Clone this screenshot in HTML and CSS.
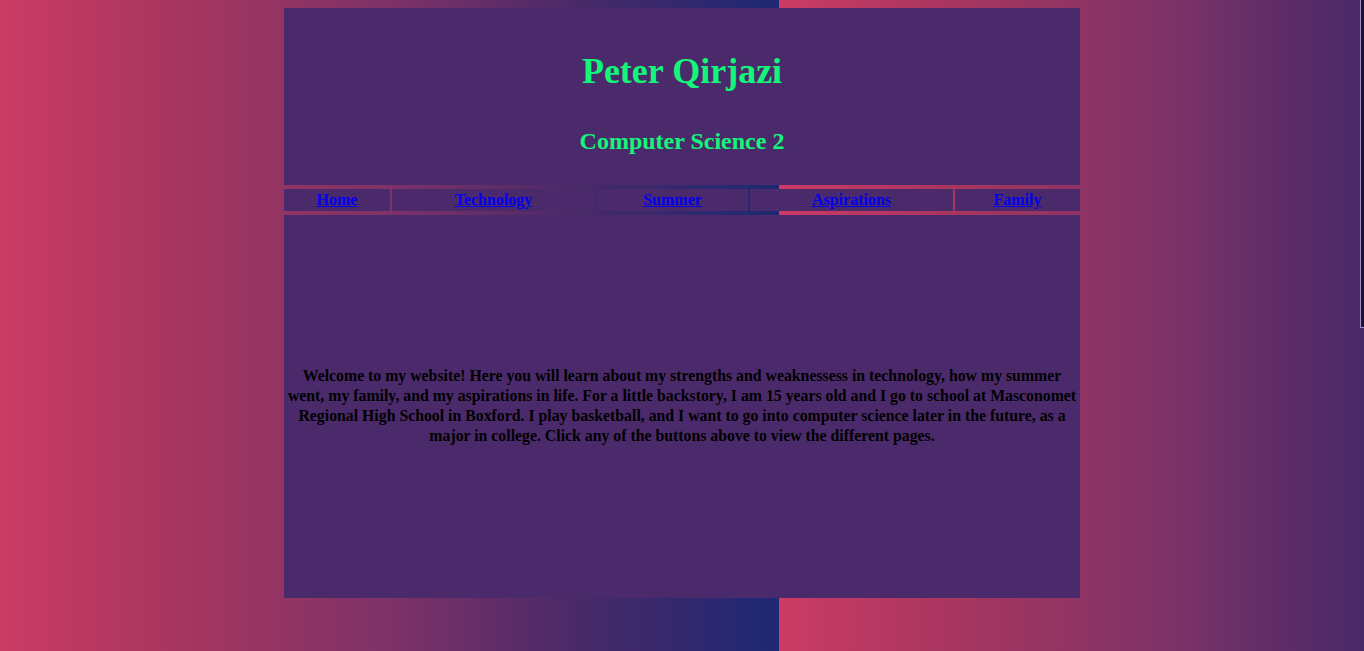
FILE: index.html
```html
<!DOCTYPE html>
<html lang="en">
<head>
<meta charset="utf-8">
<title>Peter Qirjazi</title>
<link rel="stylesheet" href="styles.css">
</head>
<body>
<div class="page">
  <header class="masthead">
    <h1 class="title">Peter Qirjazi</h1>
    <h2 class="subtitle">Computer Science 2</h2>
  </header>
  <nav class="nav">
    <div class="nav-cell"><a href="#">Home</a></div>
    <div class="nav-cell"><a href="#">Technology</a></div>
    <div class="nav-cell"><a href="#">Summer</a></div>
    <div class="nav-cell"><a href="#">Aspirations</a></div>
    <div class="nav-cell"><a href="#">Family</a></div>
  </nav>
  <main class="content">
    <p class="intro">Welcome to my website! Here you will learn about my strengths and weaknessess in technology, how my summer went, my family, and my aspirations in life. For a little backstory, I am 15 years old and I go to school at Masconomet Regional High School in Boxford. I play basketball, and I want to go into computer science later in the future, as a major in college. Click any of the buttons above to view the different pages.</p>
  </main>
</div>
<div class="edge-box"></div>
</body>
</html>
```

FILE: styles.css
```css
html {
  min-height: 100%;
  background: linear-gradient(to right, #cb3b65 0%, #a8365f 22%, #7e3268 50%, #472968 75%, #1e2874 100%) 0 0 / 779px 100% repeat-x;
}

body {
  margin: 8px 0 0 0;
  font-family: "Liberation Serif", "Times New Roman", serif;
  overflow: hidden;
}

.page {
  width: 796px;
  margin: 0 auto;
}

.masthead {
  background: #4b2a6b;
  height: 177px;
  box-sizing: border-box;
  padding-top: 43px;
  text-align: center;
}

.title {
  margin: 0;
  font-size: 36px;
  line-height: 40px;
  font-weight: bold;
  color: #12f67a;
}

.subtitle {
  margin: 37px 0 0 0;
  font-size: 24px;
  line-height: 27px;
  font-weight: bold;
  color: #12f67a;
}

.nav {
  display: grid;
  grid-template-columns: 106px 203px 151px 203px 125px;
  column-gap: 2px;
  margin: 4px 0;
}

.nav-cell {
  background: #4b2a6b;
  text-align: center;
  padding: 2px 0;
  font-size: 16px;
  line-height: 18px;
  font-weight: bold;
}

.nav-cell a {
  color: #0000ee;
  text-decoration: underline;
}

.content {
  background: #4b2a6b;
  height: 383px;
  display: flex;
  align-items: center;
  justify-content: center;
  padding: 0 3px 2px;
  box-sizing: border-box;
}

.intro {
  margin: 0;
  text-align: center;
  font-size: 15.8px;
  line-height: 20px;
  font-weight: bold;
  color: #000;
}

.edge-box {
  position: absolute;
  left: 1360px;
  top: -2px;
  width: 10px;
  height: 330px;
  box-sizing: border-box;
  border: 1px solid #a08cc0;
  background: #1c1230;
}
```
